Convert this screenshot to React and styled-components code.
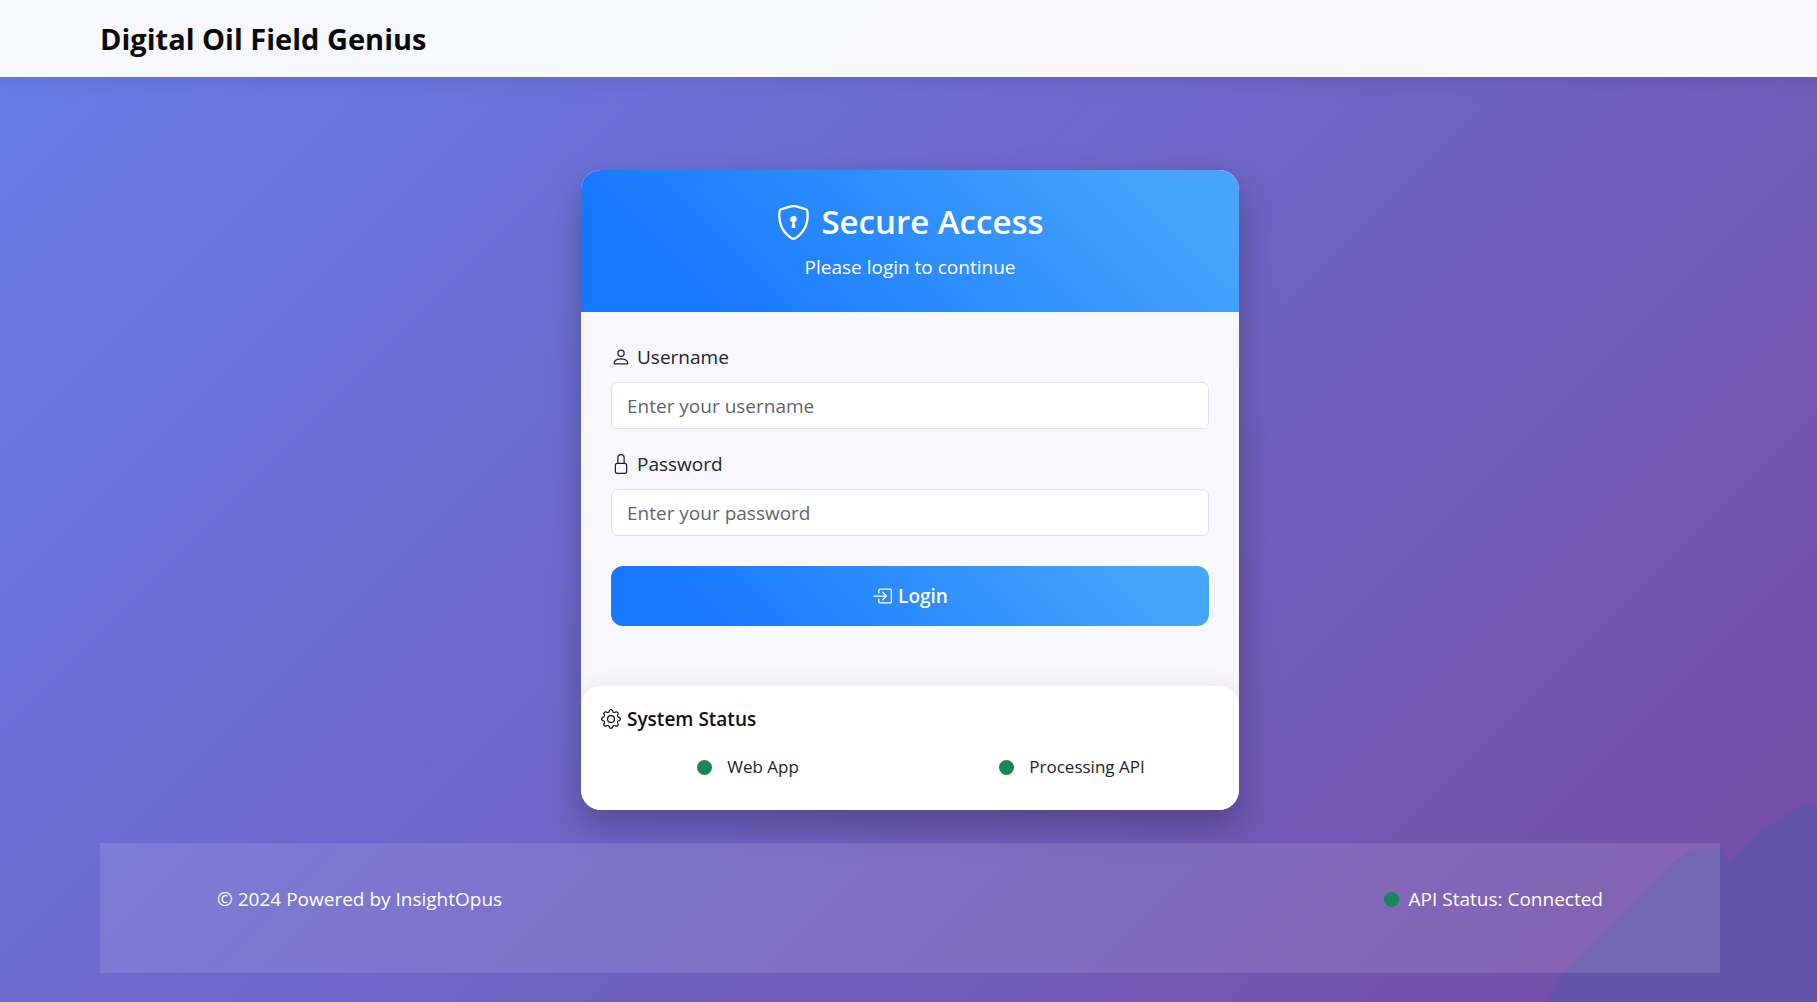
import React from 'react';
import styled, { createGlobalStyle } from 'styled-components';
import { useState } from 'react';
import { BsBoxArrowInRight, BsGear, BsLock, BsPerson, BsShieldLock } from 'react-icons/bs';

const GlobalStyle = createGlobalStyle`
    * {
        box-sizing: border-box;
    }

    body {
        margin: 0;
        font-family: 'Segoe UI', 'Open Sans', 'Noto Sans', sans-serif;
        font-size: 19px;
        line-height: 30px;
        color: #212529;
    }
`;

const Page = styled.div`
    position: relative;
    min-height: 100vh;
    display: flex;
    flex-direction: column;
    background: linear-gradient(135deg, #667eea 0%, #764ba2 100%);
    overflow: hidden;
`;

const Navbar = styled.header`
    padding: 16px 100px;
    background: rgba(255, 255, 255, 0.95);
    box-shadow: 0 2px 20px rgba(0, 0, 0, 0.1);
`;

const Brand = styled.a`
    display: block;
    font-size: 29px;
    font-weight: 700;
    line-height: 45px;
    color: #0b0b0d;
    text-decoration: none;
`;

const Main = styled.main`
    flex: 1;
    display: flex;
    align-items: center;
    justify-content: center;
    margin: 0 97px 0 100px;
    padding: 93px 0 33px;
`;

const Card = styled.section`
    width: 100%;
    max-width: 658px;
    background: rgba(255, 255, 255, 0.95);
    border-radius: 20px;
    box-shadow: 0 15px 35px rgba(0, 0, 0, 0.25);
    overflow: hidden;
`;

const CardHeader = styled.div`
    padding: 30px;
    background: linear-gradient(45deg, #1677ff 15%, #47a6fb 90%);
    color: white;
    text-align: center;
`;

const Title = styled.h1`
    display: flex;
    align-items: center;
    justify-content: center;
    gap: 10px;
    margin: 0 0 8px;
    font-size: 33px;
    font-weight: 600;
    line-height: 44px;
`;

const Subtitle = styled.p`
    margin: 0;
`;

const Form = styled.form`
    padding: 30px 30px 60px;
`;

const Field = styled.div`
    margin-bottom: ${(props) => (props.$last ? 30 : 20)}px;
`;

const Label = styled.label`
    display: flex;
    align-items: center;
    gap: 6px;
    margin-bottom: 10px;

    svg {
        width: 20px;
        height: 20px;
    }
`;

const Input = styled.input`
    display: block;
    width: 100%;
    height: 47px;
    padding: 7px 15px;
    border: 1px solid #dee2e6;
    border-radius: 7px;
    background: white;
    color: #212529;
    font: inherit;

    &::placeholder {
        color: #62656f;
        opacity: 1;
    }
`;

const Button = styled.button`
    display: flex;
    align-items: center;
    justify-content: center;
    gap: 6px;
    width: 100%;
    height: 60px;
    border: none;
    border-radius: 12px;
    background: linear-gradient(45deg, #1677ff 15%, #47a6fb 90%);
    color: white;
    font: inherit;
    font-weight: 600;
    cursor: pointer;
`;

const StatusPanel = styled.div`
    padding: 18px 20px 28px;
    background: white;
    border-radius: 20px;
    box-shadow: 0 -5px 20px rgba(0, 0, 0, 0.05);
`;

const StatusTitle = styled.h2`
    display: flex;
    align-items: center;
    gap: 6px;
    margin: 0 0 18px;
    font-size: 19px;
    font-weight: 600;
    line-height: 30px;
    color: #111114;
`;

const StatusGrid = styled.div`
    display: grid;
    grid-template-columns: 1fr 1fr;
    margin: 0 -15px;
`;

const StatusItem = styled.div`
    display: flex;
    align-items: center;
    justify-content: center;
    gap: ${(props) => props.$gap}px;
    font-size: ${(props) => props.$size}px;
`;

const Dot = styled.span`
    width: 15px;
    height: 15px;
    border-radius: 50%;
    background: #198754;
`;

const Footer = styled.footer`
    position: relative;
    display: flex;
    justify-content: space-between;
    min-height: 130px;
    margin: 0 97px 29px 100px;
    padding: 41px 117px;
    background: rgba(255, 255, 255, 0.11);
    color: white;
`;

const Wave = styled.svg`
    position: absolute;
    right: 0;
    bottom: 0;
`;

const Login = () => {
    const [username, setUsername] = useState('');
    const [password, setPassword] = useState('');

    const handleSubmit = (e) => {
        e.preventDefault();
    };

    return (
        <Form onSubmit={handleSubmit}>
            <Field>
                <Label htmlFor="username">
                    <BsPerson />
                    Username
                </Label>
                <Input
                    id="username"
                    type="text"
                    value={username}
                    onChange={(e) => setUsername(e.target.value)}
                    placeholder="Enter your username"
                />
            </Field>
            <Field $last>
                <Label htmlFor="password">
                    <BsLock />
                    Password
                </Label>
                <Input
                    id="password"
                    type="password"
                    value={password}
                    onChange={(e) => setPassword(e.target.value)}
                    placeholder="Enter your password"
                />
            </Field>
            <Button type="submit">
                <BsBoxArrowInRight size={20} />
                Login
            </Button>
        </Form>
    );
};

const App = () => {
    return (
        <Page>
            <GlobalStyle />
            <Wave width="270" height="197" viewBox="0 0 270 197" aria-hidden="true">
                <path
                    d="M0 197L16 167L124 59Q147 41 156 43H173L182 58L206 34Q218 24 254 0H270V197Z"
                    fill="#6254a8"
                />
            </Wave>
            <Navbar>
                <Brand href="#">Digital Oil Field Genius</Brand>
            </Navbar>
            <Main>
                <Card>
                    <CardHeader>
                        <Title>
                            <BsShieldLock size={35} />
                            Secure Access
                        </Title>
                        <Subtitle>Please login to continue</Subtitle>
                    </CardHeader>
                    <Login />
                    <StatusPanel>
                        <StatusTitle>
                            <BsGear size={20} />
                            System Status
                        </StatusTitle>
                        <StatusGrid>
                            <StatusItem $gap={15} $size={17}>
                                <Dot />
                                Web App
                            </StatusItem>
                            <StatusItem $gap={15} $size={17}>
                                <Dot />
                                Processing API
                            </StatusItem>
                        </StatusGrid>
                    </StatusPanel>
                </Card>
            </Main>
            <Footer>
                <span>© 2024 Powered by InsightOpus</span>
                <div>
                    <StatusItem $gap={10} $size={19}>
                        <Dot />
                        API Status: Connected
                    </StatusItem>
                </div>
            </Footer>
        </Page>
    );
};

export default App;
